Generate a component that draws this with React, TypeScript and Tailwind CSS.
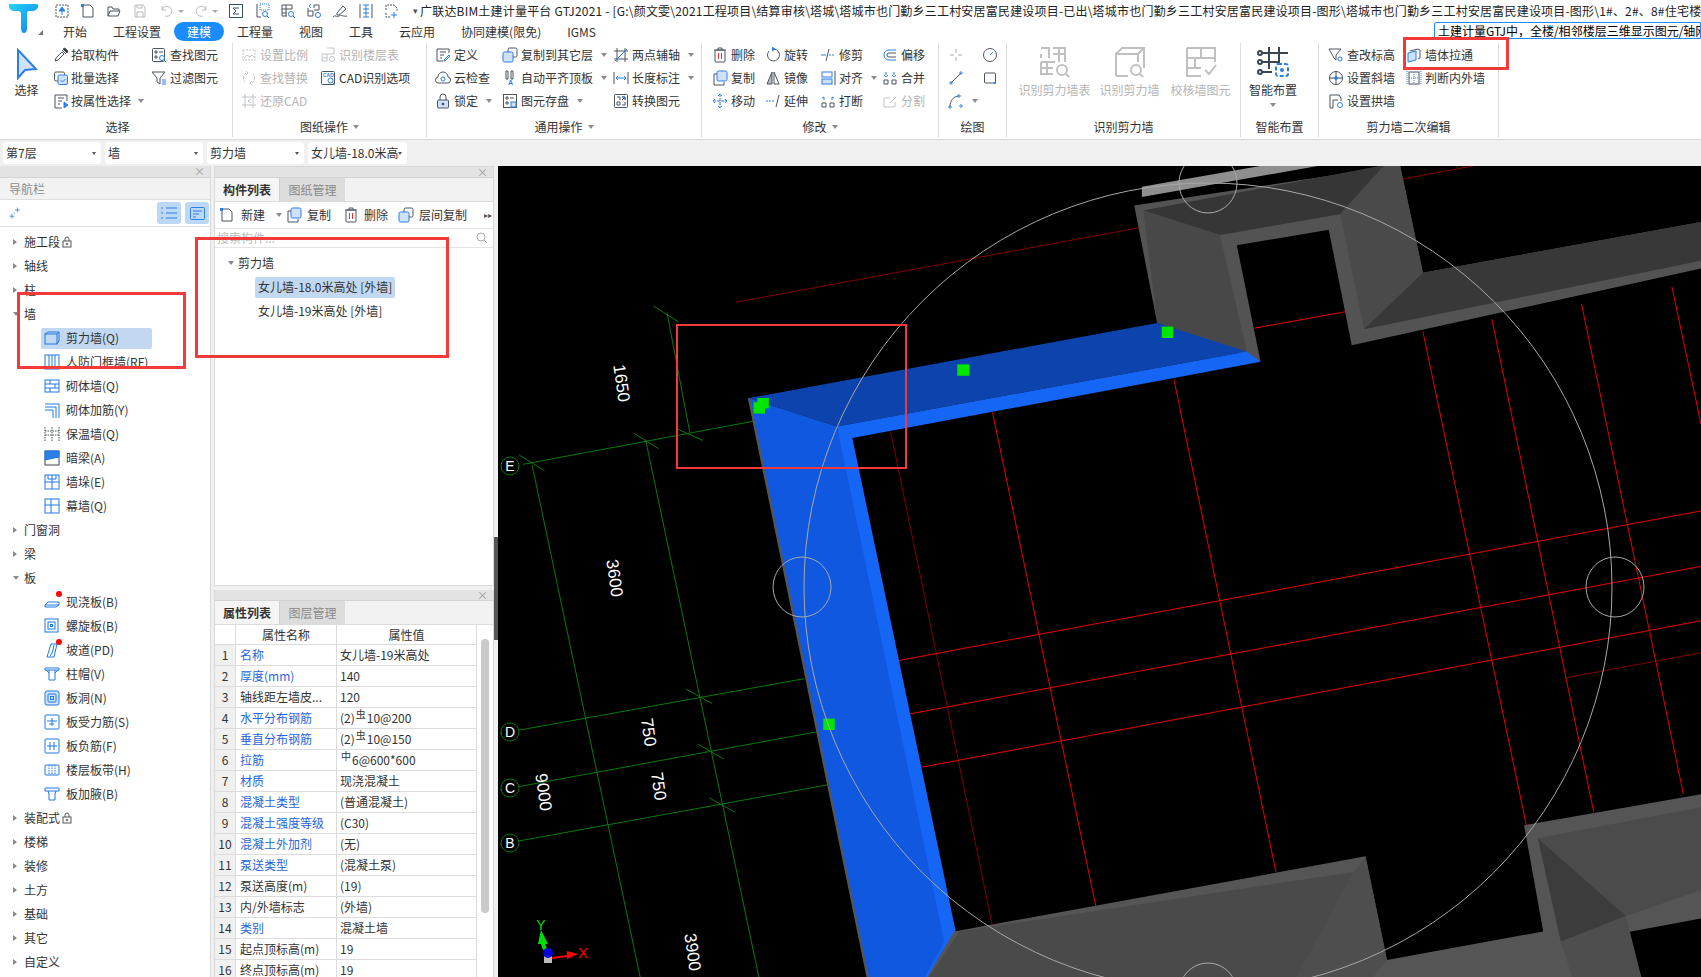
import type { ReactNode } from 'react';

const FONT = '"Noto Sans CJK SC", "Liberation Sans", sans-serif';
const D = '#4b5560';
const B = '#2a7fe8';
const L = '#cfe2fa';

function Ic({ children, size = 16, gray }: { children: ReactNode; size?: number; gray?: boolean }) {
  return (
    <svg width={size} height={size} viewBox="0 0 16 16" fill="none" stroke={D} strokeWidth="1" className={gray ? 'shrink-0 opacity-35' : 'shrink-0'}>
      {children}
    </svg>
  );
}

const icons: Record<string, ReactNode> = {
  up: (<><rect x="2" y="2" width="12" height="12" strokeDasharray="2 1" /><path d="M8 12V6M5 8l3-4 3 4z" stroke={B} fill={B} /></>),
  newf: (<><path d="M3 2h7l3 3v9H3z" /><rect x="1" y="1" width="3" height="3" fill={B} stroke="none" /></>),
  open: (<path d="M2 13V4h4l1 2h6v2M2 13l2-5h10l-2 5z" />),
  save: (<path d="M3 2h8l2 2v10H3zM5 2v3h5V2M5 14V9h6v5" stroke="#bbb" />),
  undo: (<path d="M4 3v4h4M4 7a5 5 0 1 1 3 6" stroke="#bbb" />),
  redo: (<path d="M12 3v4H8M12 7a5 5 0 1 0-3 6" stroke="#bbb" />),
  sum: (<><rect x="1.5" y="1.5" width="13" height="13" stroke="#35506e" /><path d="M11 5H5l3 3-3 3h6" stroke="#35506e" /></>),
  kb: (<><path d="M3 1v13h4" /><rect x="6" y="1" width="9" height="6" stroke={B} strokeDasharray="1 1" /><circle cx="11" cy="11" r="2.5" stroke={B} /><path d="M13 13l2 2" stroke={B} /></>),
  grid: (<><path d="M2 2h10v4M2 2v11h5M2 6h10M2 10h5M6 2v11" /><circle cx="11" cy="11" r="2.5" stroke={B} /><path d="M13 13l2 2" stroke={B} /></>),
  grid2: (<><path d="M8 2v3M8 2h5v5H8M2 8h5v5H2zM2 8V5" /><path d="M5 1l-2 2 2 2" stroke={B} /><circle cx="12" cy="12" r="2.5" stroke={B} /></>),
  pen: (<><path d="M5 10l6-7 3 3-7 6H5z" /><path d="M1 14c2-3 4 1 6-1s4 1 8 0" stroke={D} /></>),
  cols: (<><path d="M2 1v14M14 1v14" /><path d="M5 2h6M5 6h6M5 10h6M5 14h6M8 2v12" stroke={B} /></>),
  add: (<><path d="M2 7V2h8l3 3v3M2 10v4h4" strokeDasharray="2 1" /><path d="M10 9v6M7 12h6" stroke={B} /></>),
  pick: (<><path d="M2 14l1-3 6-6 2 2-6 6z" /><path d="M9 3l4 4M10 2l2-1 3 3-1 2z" fill="#333" /></>),
  batch: (<><rect x="1.5" y="2" width="10" height="9" rx="1.5" /><rect x="5" y="5" width="9.5" height="9.5" rx="1.5" fill={L} stroke={B} /><path d="M7.5 10l2 2 3-3" stroke={B} /></>),
  attr: (<><path d="M14 8V2H2v13h7" /><path d="M5 5h6M5 8h4M5 11h2" /><path d="M11 9v6l4-3z" fill={B} stroke={B} /></>),
  find: (<><rect x="1.5" y="1.5" width="12" height="13" rx="1" /><path d="M4 4h2v2H4zM8 5h4M4 9h2v2H4z" /><circle cx="11" cy="11" r="2.5" stroke={B} /><path d="M13 13l2 2" stroke={B} /></>),
  filter: (<><path d="M1 2h13L9 8v6L6 12V8z" /><path d="M11 10h4M11 12h4M11 14h4" stroke={B} /></>),
  scale: (<><path d="M2 3h12v10H2z" strokeDasharray="2 1" /><path d="M3 11l3-3 3 2 2-2 3 3" /></>),
  floors: (<><path d="M7 1h7v6H7M2 7h5v7H2zM2 11h5" /><circle cx="12" cy="12" r="2.5" /></>),
  repl: (<><path d="M5 3a6 6 0 0 0-1 9M11 13a6 6 0 0 0 1-9" strokeDasharray="3 1" /><path d="M5 1l2 2-2 2M11 15l-2-2 2-2" /></>),
  cad: (<><rect x="1.5" y="1.5" width="13" height="13" rx="1" /><text x="3" y="7" fontSize="5" fontFamily="Liberation Sans" fill={B} stroke="none" fontWeight="700">CAD</text><circle cx="10.5" cy="10.5" r="2.5" stroke={B} /><path d="M12.5 12.5l2 2" stroke={B} /></>),
  restore: (<><path d="M4 1v14M1 4h14M12 1v14M1 12h14" /><path d="M10 6L7 8l3 2" /></>),
  def: (<><path d="M14 6V2H2v12h6" /><path d="M5 5h6M5 8h4M5 11h2" /><path d="M9 13l5-5 1 1-5 5H9z" stroke={B} /></>),
  cloud: (<><path d="M4 13a3 3 0 0 1-1-6 5 5 0 0 1 10 0 3 3 0 0 1-1 6z" /><circle cx="8" cy="9" r="2" stroke={B} /></>),
  lock: (<><path d="M5 7V4a3 3 0 0 1 6 0v3" /><rect x="2.5" y="7" width="11" height="8" rx="1" fill={L} stroke={D} /><circle cx="8" cy="11" r="1" fill="#333" /></>),
  copyl: (<><rect x="6" y="1" width="9" height="9" rx="1.5" /><rect x="1" y="5" width="10" height="10" rx="1.5" fill={L} stroke={B} /></>),
  align: (<><path d="M4 1h2v8H4zM9 1h2v8H9z" /><text x="6" y="15" fontSize="7" fontFamily="Liberation Sans" fill={B} stroke="none" fontWeight="700">A</text></>),
  store: (<><rect x="1.5" y="1.5" width="13" height="13" /><path d="M4 4h2v2H4zM8 5h4M4 9h2v2H4z" /><rect x="9" y="9" width="5" height="5" fill={L} stroke={B} /></>),
  twop: (<><path d="M4 1v14M12 1v14M1 4h14M1 12h14" /><path d="M2 14L14 2" stroke={B} /></>),
  dim: (<><path d="M1 2v12M15 2v12" /><path d="M3 8h10M5 6L3 8l2 2M11 6l2 2-2 2" stroke={B} /></>),
  conv: (<><rect x="1.5" y="1.5" width="13" height="13" rx="1" /><path d="M9 4h3v3M9 7l3-3M4 9h3v3H4zM4 4h3v3M12 9v3H9" stroke={D} /><path d="M9 4h3v3" stroke={B} /></>),
  del: (<><path d="M2 3h12M6 3V1h4v2" /><rect x="3" y="3" width="10" height="12" rx="1" /><path d="M6.5 6v6M9.5 6v6" stroke="#e33" /></>),
  rot: (<><path d="M9 2a6 6 0 1 1-5 2" /><path d="M7 0l3 2-3 2" stroke={B} fill={B} /></>),
  trim: (<><path d="M1 8h5" stroke={B} /><path d="M9 8h5" stroke={B} strokeDasharray="2 1" /><path d="M9 2L6 14" /></>),
  offs: (<><path d="M14 3H7a5 5 0 0 0 0 10h7" stroke={B} /><path d="M14 6H7a2 2 0 0 0 0 4h7" /></>),
  copy: (<><rect x="5" y="1" width="10" height="10" rx="1.5" fill={L} stroke={B} /><path d="M5 4H2v11h10v-3" /></>),
  mirr: (<><path d="M7 2L2 14h5z" fill="#bbb" /><path d="M9 2l5 12H9z" /></>),
  alig: (<><rect x="2" y="2" width="10" height="5" stroke={B} /><rect x="2" y="9" width="10" height="5" stroke={B} fill={L} /><path d="M15 1v14" /></>),
  merge: (<><path d="M2 10h4v4H2zM10 10h4v4h-4z" /><path d="M4 2v3M12 2v3M2 5l2 2 2-2M10 5l2 2 2-2" stroke={B} /></>),
  move: (<path d="M8 1v14M1 8h14M6 3l2-2 2 2M6 13l2 2 2-2M3 6L1 8l2 2M13 6l2 2-2 2" stroke={B} strokeDasharray="3 1" />),
  ext: (<><path d="M1 8h9" stroke={B} strokeDasharray="2 1" /><path d="M14 2l-3 12" /></>),
  brk: (<><path d="M2 10h4v4H2zM10 10h4v4h-4z" /><path d="M4 7V4l-2 1M12 7V4l2 1" stroke={B} /></>),
  split: (<><path d="M2 5h6M2 5v9h11V9" /><path d="M8 10l6-6" /></>),
  cross: (<path d="M8 2v4M8 10v4M2 8h4M10 8h4" stroke="#aaa" />),
  clock: (<><circle cx="8" cy="8" r="6.5" /><path d="M8 8l3-3" stroke={B} /></>),
  line: (<><path d="M3 13L13 3" /><circle cx="3" cy="13" r="1.2" stroke={B} /><circle cx="13" cy="3" r="1.2" stroke={B} /></>),
  rect: (<><rect x="2.5" y="3" width="11" height="10" rx="1" /><circle cx="13" cy="13" r=".8" stroke={B} /></>),
  arc: (<><path d="M2 14C2 7 6 3 11 3" /><circle cx="2" cy="14" r="1.2" stroke={B} /><circle cx="11" cy="3" r="1.2" stroke={B} /><circle cx="13" cy="13" r="1.2" stroke={B} /></>),
  level: (<><path d="M1 2h12L8 8v5L6 11 1 2z" /><circle cx="12" cy="12" r="2" stroke={B} /></>),
  slope: (<><circle cx="8" cy="8" r="6.5" /><path d="M1 8h14M8 1v14" /><circle cx="8" cy="8" r="1.5" fill={B} stroke={B} /></>),
  archw: (<><path d="M2 15V2h9l2 3v3M2 15h3V7h5" /><circle cx="12" cy="12" r="2.5" stroke={B} /></>),
  pull: (<><path d="M4 4l8-2 2 1v8l-2 1" stroke={D} /><path d="M2 6l8-2v9l-8 2z" fill={L} stroke={B} /></>),
  inout: (<><rect x="3" y="2" width="10" height="12" /><path d="M3 8h10M8 2v12M1 1v14M15 1v14" strokeDasharray="1 1" stroke={B} /></>),
  spark: (<path d="M2 13h6M5 10v6M9 5h6M12 2v6M7 9h2" stroke={B} transform="scale(.9)" />),
};

function Caret() {
  return <span className="ml-[5px] w-0 h-0 border-x-[3px] border-x-transparent border-t-[4px] border-t-[#8c8c8c]" />;
}

function RI({ icon, label, dis, arrow, gap }: { icon: string; label?: string; dis?: boolean; arrow?: boolean; gap?: string }) {
  return (
    <div className={`flex items-center h-[23px] ${gap ?? 'gap-[3px]'}`}>
      <Ic gray={dis}>{icons[icon]}</Ic>
      {label && <span className={dis ? 'text-[#b4b4b4] whitespace-nowrap' : 'text-[#333] whitespace-nowrap'}>{label}</span>}
      {arrow && <Caret />}
    </div>
  );
}

function Col({ w, children }: { w: string; children: ReactNode }) {
  return <div className={`flex flex-col shrink-0 ${w}`}>{children}</div>;
}

function Group({ w, label, pl, arrow, lab, children }: { w: string; label: string; pl: string; arrow?: boolean; lab?: string; children: ReactNode }) {
  return (
    <div className={`flex flex-col shrink-0 border-r border-[#dcdcdc] my-[2px] ${w}`}>
      <div className={`flex flex-1 ${pl}`}>{children}</div>
      <div className={`h-[21px] flex items-center justify-center text-[#333] ${lab ?? ''}`}>
        {label}
        {arrow && <Caret />}
      </div>
    </div>
  );
}

function BigBtn({ w, label, dis, arrow, children }: { w: string; label: string; dis?: boolean; arrow?: boolean; children: ReactNode }) {
  return (
    <div className={`flex flex-col items-center shrink-0 ${w}`}>
      <div className="h-[38px] flex items-center">{children}</div>
      <span className={dis ? 'text-[#b4b4b4] whitespace-nowrap mt-[3px]' : 'text-[#333] whitespace-nowrap mt-[3px]'}>{label}</span>
      {arrow && <span className="mt-[7px] w-0 h-0 border-x-[3px] border-x-transparent border-t-[4px] border-t-[#8c8c8c]" />}
    </div>
  );
}

function Ribbon() {
  return (
    <div className="h-[99px] bg-white border-b border-[#d8d8d8] flex text-[12px] leading-none">
      <Group w="w-[233px]" label="选择" pl="pl-0" lab="pl-[3px]">
        <BigBtn w="w-[53px]" label="选择">
          <svg width="22" height="32" viewBox="0 0 22 32" className="mt-[4px]">
            <path d="M2 2l18 19-11 1-7 8z" fill={L} stroke={B} strokeWidth="2" />
          </svg>
        </BigBtn>
        <Col w="w-[98px]">
          <RI icon="pick" label="拾取构件" gap="gap-[2px]" />
          <RI icon="batch" label="批量选择" gap="gap-[2px]" />
          <RI icon="attr" label="按属性选择" arrow gap="gap-[2px]" />
        </Col>
        <Col w="w-[80px]">
          <RI icon="find" label="查找图元" />
          <RI icon="filter" label="过滤图元" />
        </Col>
      </Group>
      <Group w="w-[194px]" label="图纸操作" pl="pl-[8px]" arrow>
        <Col w="w-[79px]">
          <RI icon="scale" label="设置比例" dis />
          <RI icon="repl" label="查找替换" dis />
          <RI icon="restore" label="还原CAD" dis />
        </Col>
        <Col w="w-[100px]">
          <RI icon="floors" label="识别楼层表" dis />
          <RI icon="cad" label="CAD识别选项" />
        </Col>
      </Group>
      <Group w="w-[275px]" label="通用操作" pl="pl-[8px]" arrow>
        <Col w="w-[67px]">
          <RI icon="def" label="定义" />
          <RI icon="cloud" label="云检查" />
          <RI icon="lock" label="锁定" arrow />
        </Col>
        <Col w="w-[111px]">
          <RI icon="copyl" label="复制到其它层" arrow />
          <RI icon="align" label="自动平齐顶板" arrow />
          <RI icon="store" label="图元存盘" arrow />
        </Col>
        <Col w="w-[80px]">
          <RI icon="twop" label="两点辅轴" arrow />
          <RI icon="dim" label="长度标注" arrow />
          <RI icon="conv" label="转换图元" />
        </Col>
      </Group>
      <Group w="w-[237px]" label="修改" pl="pl-[10px]" arrow>
        <Col w="w-[53px]">
          <RI icon="del" label="删除" />
          <RI icon="copy" label="复制" />
          <RI icon="move" label="移动" />
        </Col>
        <Col w="w-[55px]">
          <RI icon="rot" label="旋转" />
          <RI icon="mirr" label="镜像" />
          <RI icon="ext" label="延伸" />
        </Col>
        <Col w="w-[62px]">
          <RI icon="trim" label="修剪" />
          <RI icon="alig" label="对齐" arrow />
          <RI icon="brk" label="打断" />
        </Col>
        <Col w="w-[50px]">
          <RI icon="offs" label="偏移" />
          <RI icon="merge" label="合并" />
          <RI icon="split" label="分割" dis />
        </Col>
      </Group>
      <Group w="w-[68px]" label="绘图" pl="pl-[9px]">
        <Col w="w-[34px]">
          <RI icon="cross" />
          <RI icon="line" />
          <RI icon="arc" arrow />
        </Col>
        <Col w="w-[20px]">
          <RI icon="clock" />
          <RI icon="rect" />
        </Col>
      </Group>
      <Group w="w-[234px]" label="识别剪力墙" pl="pl-[10px]">
        <BigBtn w="w-[75px]" label="识别剪力墙表" dis>
          <svg width="32" height="32" viewBox="0 0 32 32" fill="none" stroke="#c0c0c0" strokeWidth="2">
            <path d="M2 2h8v10M2 12V8M14 2h12v14M20 2v14M14 8h12M2 16h14M2 16v12h12M8 16v12M2 22h12" />
            <circle cx="23" cy="24" r="5" />
            <path d="M27 28l3 3" />
          </svg>
        </BigBtn>
        <BigBtn w="w-[75px]" label="识别剪力墙" dis>
          <svg width="32" height="32" viewBox="0 0 32 32" fill="none" stroke="#c0c0c0" strokeWidth="2">
            <path d="M2 30V8h22v8M2 8l6-6h22v20M24 8l6-6M14 30H2" />
            <circle cx="22" cy="24" r="5" />
            <path d="M26 28l3 3" />
          </svg>
        </BigBtn>
        <BigBtn w="w-[67px]" label="校核墙图元" dis>
          <svg width="32" height="32" viewBox="0 0 32 32" fill="none" stroke="#c0c0c0" strokeWidth="2">
            <path d="M2 2h28v14M2 2v28h14M2 12h28M16 2v10M10 12v10M2 22h14M20 24l4 4 7-9" />
          </svg>
        </BigBtn>
      </Group>
      <Group w="w-[78px]" label="智能布置" pl="pl-0">
        <BigBtn w="w-[64px]" label="智能布置" arrow>
          <svg width="32" height="32" viewBox="0 0 32 32" fill="none" stroke="#3c4650" strokeWidth="2" className="mt-[-2px]">
            <path d="M12 2v22M22 2v14M5 8h26M5 17h18M5 27h10" />
            <circle cx="3" cy="8" r="2" />
            <circle cx="3" cy="17" r="2" />
            <circle cx="3" cy="27" r="2" />
            <rect x="19" y="19" width="12" height="12" rx="2" stroke={B} strokeDasharray="4 2" />
            <circle cx="25" cy="25" r="1" fill={B} stroke={B} />
          </svg>
        </BigBtn>
      </Group>
      <Group w="w-[180px]" label="剪力墙二次编辑" pl="pl-[9px]">
        <Col w="w-[78px]">
          <RI icon="level" label="查改标高" />
          <RI icon="slope" label="设置斜墙" />
          <RI icon="archw" label="设置拱墙" />
        </Col>
        <Col w="w-[80px]">
          <RI icon="pull" label="墙体拉通" />
          <RI icon="inout" label="判断内外墙" />
        </Col>
      </Group>
    </div>
  );
}

function Combo({ w, label }: { w: string; label: string }) {
  return (
    <div className={`h-[22px] bg-white rounded-[3px] flex items-center justify-between pl-[3px] pr-[5px] overflow-hidden ${w}`}>
      <span className="whitespace-nowrap overflow-hidden">{label}</span>
      <span className="shrink-0 w-0 h-0 border-x-[2.5px] border-x-transparent border-t-[3px] border-t-[#555]" />
    </div>
  );
}

function TitleBar() {
  const qat = ['up', 'newf', 'open', 'save', 'undo', 'redo', 'sum', 'kb', 'grid', 'grid2', 'pen', 'cols', 'add'];
  return (
    <div className="h-[41px] bg-white flex text-[12px] relative">
      <div className="w-[50px] shrink-0 relative">
        <svg width="30" height="30" viewBox="0 0 30 30" className="ml-[9px] mt-[3px]">
          <defs>
            <linearGradient id="tlogo" x1="0" y1="0" x2="1" y2="1">
              <stop offset="0" stopColor="#28d6f5" />
              <stop offset="1" stopColor="#0b7df0" />
            </linearGradient>
          </defs>
          <path d="M3 1h24q3 0 2 3t-5 4h-4q-2 0-2 3v14q0 5-3 5t-3-5V11q0-3-3-3H6Q1 8 0 4t3-3z" fill="url(#tlogo)" />
        </svg>
        <span className="absolute left-[38px] top-[30px] w-0 h-0 border-l-[5px] border-l-transparent border-b-[5px] border-b-[#777]" />
      </div>
      <div className="flex-1 min-w-0 flex flex-col">
        <div className="h-[22px] flex items-center overflow-hidden">
          <div className="flex items-center ml-[4px] shrink-0 gap-[10px]">
            {qat.map((k) => (
              <span key={k} className="flex items-center">
                <Ic>{icons[k]}</Ic>
                {k === 'undo' && <span className="ml-[4px] w-0 h-0 border-x-[3px] border-x-transparent border-t-[3px] border-t-[#aaa]" />}
                {k === 'redo' && <span className="ml-[2px] w-0 h-0 border-x-[3px] border-x-transparent border-t-[3px] border-t-[#aaa]" />}
              </span>
            ))}
          </div>
          <span className="ml-[13px] mr-[2px] shrink-0 text-[#555] text-[9px]">▾</span>
          <span className="whitespace-nowrap text-[#222] text-[12px] tracking-[0.2px]">
            广联达BIM土建计量平台 GTJ2021 - [G:\颜文雯\2021工程项目\结算审核\塔城\塔城市也门勤乡三工村安居富民建设项目-已出\塔城市也门勤乡三工村安居富民建设项目-图形\塔城市也门勤乡三工村安居富民建设项目-图形\1#、2#、8#住宅楼.GTJ]
          </span>
        </div>
        <div className="h-[19px] flex items-center text-[#333]">
          {['开始', '工程设置', '建模', '工程量', '视图', '工具', '云应用', '协同建模(限免)', 'IGMS'].map((t) => (
            <span key={t} className={t === '建模' ? 'h-[19px] px-[13px] flex items-center rounded-full bg-[#1a8cff] text-white' : 'px-[13px] whitespace-nowrap'}>
              {t}
            </span>
          ))}
        </div>
      </div>
      <div className="absolute left-[1434px] right-0 top-[22px] h-[17px] bg-white border border-[#1a8cff] rounded-l-[2px] overflow-hidden whitespace-nowrap text-black leading-[15px] pl-[3px]">
        土建计量GTJ中，全楼/相邻楼层三维显示图元/轴网
      </div>
    </div>
  );
}

function Wicon({ k }: { k: number }) {
  const paths = [
    <><rect x="1" y="4" width="12" height="10" /><path d="M1 4l3-2h11v9l-2 3M13 4l2-2" /></>,
    <><rect x="1" y="1" width="14" height="14" /><path d="M5 1v14M8 1v14M11 1v14" /></>,
    <><rect x="1" y="2" width="14" height="12" /><path d="M1 6h14M1 10h14M6 2v4M11 6v4M6 10v4" /></>,
    <><path d="M1 2h14v14M1 5h11v11M1 8h8v8" /></>,
    <><path d="M1 1v14M15 1v14M8 1v14M1 5h14M1 9h14" strokeDasharray="1.5 1" stroke="#455" /></>,
    <><rect x="1" y="1" width="14" height="14" stroke="#445" /><path d="M1 1h14v6L1 10z" fill={B} /></>,
    <><rect x="1" y="1" width="14" height="14" /><path d="M1 8h14M8 1v14M4 1v4h8V1" /></>,
    <><rect x="1" y="1" width="14" height="14" /><path d="M1 7h14M7 1v14" /></>,
    <><path d="M1 11l3-3h11v3zM1 11v2h11l3-2" /></>,
    <><rect x="1" y="1" width="13" height="13" /><rect x="4" y="4" width="7" height="7" /><rect x="6.5" y="6.5" width="2" height="2" /></>,
    <><path d="M3 15L7 2h6l-3 13zM6 14c3-3 3-7 4-11" /></>,
    <><path d="M1 2h14v2H1zM5 4v10h6V4M2 4l3 3M14 4l-3 3" /></>,
    <><rect x="1" y="1" width="14" height="14" rx="2" fill={L} /><rect x="4" y="4" width="8" height="8" rx="1" /><rect x="6.5" y="6.5" width="3" height="3" /></>,
    <><rect x="1" y="1" width="14" height="14" rx="1" /><path d="M3 7h10M8 4v8M5 10h5" /></>,
    <><rect x="1" y="1" width="14" height="14" rx="1" /><path d="M6 4v8M10 4v8M3 8h10" /></>,
    <><rect x="1" y="3" width="14" height="10" rx="1" /><path d="M5 3v10M8 3v10M11 3v10" strokeDasharray="1.5 1" /></>,
    <><path d="M1 2h14v3H1zM4 5l1 3v6h6V8l1-3" /></>,
  ];
  return (
    <svg width="16" height="16" viewBox="0 0 16 16" fill="none" stroke="#1f78e6" strokeWidth="1" className="shrink-0">
      {paths[k]}
    </svg>
  );
}

function Tri({ open }: { open?: boolean }) {
  return open ? (
    <span className="w-0 h-0 border-x-[3.5px] border-x-transparent border-t-[4px] border-t-[#888]" />
  ) : (
    <span className="w-0 h-0 border-y-[3.5px] border-y-transparent border-l-[4px] border-l-[#888]" />
  );
}

function Lock() {
  return (
    <svg width="10" height="12" viewBox="0 0 10 12" fill="none" stroke="#555" className="ml-[2px]">
      <path d="M3 5V3a2 2 0 0 1 4 0v2" />
      <rect x="1" y="5" width="8" height="6" />
      <circle cx="5" cy="8" r=".8" />
    </svg>
  );
}

type NavNode = { t: string; open?: boolean; lock?: boolean; kids?: { t: string; k: number; sel?: boolean; dot?: boolean }[] };

const nav: NavNode[] = [
  { t: '施工段', lock: true },
  { t: '轴线' },
  { t: '柱' },
  {
    t: '墙',
    open: true,
    kids: [
      { t: '剪力墙(Q)', k: 0, sel: true },
      { t: '人防门框墙(RF)', k: 1 },
      { t: '砌体墙(Q)', k: 2 },
      { t: '砌体加筋(Y)', k: 3 },
      { t: '保温墙(Q)', k: 4 },
      { t: '暗梁(A)', k: 5 },
      { t: '墙垛(E)', k: 6 },
      { t: '幕墙(Q)', k: 7 },
    ],
  },
  { t: '门窗洞' },
  { t: '梁' },
  {
    t: '板',
    open: true,
    kids: [
      { t: '现浇板(B)', k: 8, dot: true },
      { t: '螺旋板(B)', k: 9 },
      { t: '坡道(PD)', k: 10, dot: true },
      { t: '柱帽(V)', k: 11 },
      { t: '板洞(N)', k: 12 },
      { t: '板受力筋(S)', k: 13 },
      { t: '板负筋(F)', k: 14 },
      { t: '楼层板带(H)', k: 15 },
      { t: '板加腋(B)', k: 16 },
    ],
  },
  { t: '装配式', lock: true },
  { t: '楼梯' },
  { t: '装修' },
  { t: '土方' },
  { t: '基础' },
  { t: '其它' },
  { t: '自定义' },
];

function CloseStrip({ tall }: { tall?: boolean }) {
  return (
    <div className={`${tall ? 'h-[12px]' : 'h-[11px]'} bg-[#e3e3e3] flex items-center justify-end pr-[5px] border-b border-[#d4d4d4]`}>
      <span className="text-[#9a9a9a] text-[11px] leading-none">×</span>
    </div>
  );
}

function NavPanel() {
  return (
    <div className="w-[211px] shrink-0 bg-white flex flex-col border-r border-[#d8d8d8] overflow-hidden text-[12px]">
      <CloseStrip tall />
      <div className="h-[21px] bg-[#f2f2f2] flex items-center pl-[9px] text-[#8c8c8c]">导航栏</div>
      <div className="h-[28px] flex items-center border-y border-[#dedede] pl-[8px] pr-[1px]">
        <Ic size={14}>{icons.spark}</Ic>
        <div className="ml-auto flex gap-[4px]">
          <span className="w-[24px] h-[22px] bg-[#bcd8f5] rounded-[3px] flex items-center justify-center">
            <svg width="16" height="12" viewBox="0 0 16 12" stroke={B} fill="none">
              <path d="M5 1h11M5 6h11M5 11h11M0 1h2M0 6h2M0 11h2" />
            </svg>
          </span>
          <span className="w-[24px] h-[22px] bg-[#bcd8f5] rounded-[3px] flex items-center justify-center">
            <svg width="15" height="13" viewBox="0 0 15 13" stroke={B} fill="none">
              <rect x=".5" y=".5" width="14" height="12" rx="1" />
              <path d="M3 4h9M3 7h6M3 10h3" />
            </svg>
          </span>
        </div>
      </div>
      <div className="pt-[3px] text-[#333]">
        {nav.map((n) => (
          <div key={n.t}>
            <div className="h-[24px] flex items-center">
              <span className="w-[24px] shrink-0 pl-[13px] flex items-center">
                <Tri open={n.open} />
              </span>
              {n.t}
              {n.lock && <Lock />}
            </div>
            {n.kids?.map((c) => (
              <div key={c.t} className="h-[24px] flex items-center pl-[41px]">
                <div className={c.sel ? 'flex items-center h-[21px] w-[111px] bg-[#c1d8f0] rounded-[2px] pl-[3px]' : 'flex items-center h-[21px] pl-[3px] relative'}>
                  <Wicon k={c.k} />
                  <span className="ml-[6px]">{c.t}</span>
                  {c.dot && <span className="absolute left-[15px] top-[-1px] w-[6px] h-[6px] rounded-full bg-[#f00]" />}
                </div>
              </div>
            ))}
          </div>
        ))}
      </div>
    </div>
  );
}

function Tabs({ a, b }: { a: string; b: string }) {
  return (
    <div className="h-[24px] flex border-b border-[#dcdcdc] bg-[#f2f2f2]">
      <span className="w-[65px] flex items-center justify-center font-bold text-[#333] bg-[#f5f5f5] border-r border-[#d0d0d0]">{a}</span>
      <span className="w-[65px] flex items-center justify-center text-[#8a8a8a] bg-[#dcdcdc]">{b}</span>
    </div>
  );
}

const rows: { n: string; v: ReactNode; blue?: boolean }[] = [
  { n: '名称', v: '女儿墙-19米高处', blue: true },
  { n: '厚度(mm)', v: '140', blue: true },
  { n: '轴线距左墙皮...', v: '120' },
  { n: '水平分布钢筋', v: (<>(2)<sup className="text-[10px] mx-[1px]">虫</sup>10@200</>), blue: true },
  { n: '垂直分布钢筋', v: (<>(2)<sup className="text-[10px] mx-[1px]">虫</sup>10@150</>), blue: true },
  { n: '拉筋', v: (<><sup className="text-[10px] mx-[1px]">中</sup>6@600*600</>), blue: true },
  { n: '材质', v: '现浇混凝土', blue: true },
  { n: '混凝土类型', v: '(普通混凝土)', blue: true },
  { n: '混凝土强度等级', v: '(C30)', blue: true },
  { n: '混凝土外加剂', v: '(无)', blue: true },
  { n: '泵送类型', v: '(混凝土泵)', blue: true },
  { n: '泵送高度(m)', v: '(19)' },
  { n: '内/外墙标志', v: '(外墙)' },
  { n: '类别', v: '混凝土墙', blue: true },
  { n: '起点顶标高(m)', v: '19' },
  { n: '终点顶标高(m)', v: '19' },
];

function MidPanel() {
  return (
    <div className="w-[287px] shrink-0 flex flex-col pl-[3px] pr-[4px] bg-[#f0f0f0] text-[12px] text-[#333] overflow-hidden">
      <div className="h-[420px] shrink-0 bg-white border border-[#d8d8d8] flex flex-col">
        <CloseStrip />
        <Tabs a="构件列表" b="图纸管理" />
        <div className="h-[27px] flex items-center border-b border-[#e4e4e4] pl-[4px] relative">
          <span className="flex items-center w-[67px] gap-[6px]">
            <Ic>{icons.newf}</Ic>新建<Caret />
          </span>
          <span className="flex items-center w-[57px] gap-[5px]">
            <Ic>{icons.copy}</Ic>复制
          </span>
          <span className="flex items-center w-[55px] gap-[5px]">
            <Ic>{icons.del}</Ic>删除
          </span>
          <span className="flex items-center gap-[5px]">
            <Ic>{icons.copyl}</Ic>层间复制
          </span>
          <span className="absolute right-[1px] text-[#555] text-[8px]">▸▸</span>
        </div>
        <div className="h-[19px] flex items-center justify-between border-b border-[#e4e4e4] px-[2px] text-[#bbb]">
          搜索构件...
          <svg width="12" height="12" viewBox="0 0 12 12" fill="none" stroke="#aaa" className="mr-[3px]">
            <circle cx="5" cy="5" r="4" />
            <path d="M8 8l3 3" />
          </svg>
        </div>
        <div className="pt-[3px]">
          <div className="h-[24px] flex items-center pl-[13px] gap-[4px]">
            <Tri open />
            剪力墙
          </div>
          <div className="h-[24px] flex items-center pl-[40px]">
            <span className="h-[21px] px-[3px] flex items-center bg-[#c1d8f0] rounded-[2px]">女儿墙-18.0米高处 [外墙]</span>
          </div>
          <div className="h-[24px] flex items-center pl-[43px]">女儿墙-19米高处 [外墙]</div>
        </div>
      </div>
      <div className="h-[4px] shrink-0" />
      <div className="flex-1 min-h-0 bg-white border-x border-[#d8d8d8] flex flex-col overflow-hidden">
        <CloseStrip />
        <Tabs a="属性列表" b="图层管理" />
        <div className="flex flex-1 min-h-0 overflow-hidden">
          <div className="w-[262px] shrink-0">
            <div className="h-[20px] flex border-b border-[#dcdcdc]">
              <span className="w-[21px] border-r border-[#dcdcdc]" />
              <span className="w-[101px] text-center border-r border-[#dcdcdc] leading-[20px]">属性名称</span>
              <span className="flex-1 text-center border-r border-[#dcdcdc] leading-[20px]">属性值</span>
            </div>
            {rows.map((r, i) => (
              <div key={r.n} className="h-[21px] flex border-b border-[#dcdcdc] leading-[20px]">
                <span className="w-[21px] shrink-0 text-center bg-[#f0f0f0] border-r border-[#dcdcdc] text-[#333]">{i + 1}</span>
                <span className={r.blue ? 'w-[101px] shrink-0 pl-[4px] border-r border-[#dcdcdc] text-[#1f66e0]' : 'w-[101px] shrink-0 pl-[4px] border-r border-[#dcdcdc]'}>{r.n}</span>
                <span className="flex-1 pl-[3px] border-r border-[#dcdcdc] whitespace-nowrap">{r.v}</span>
              </div>
            ))}
          </div>
          <div className="flex-1 pt-[14px] flex justify-center">
            <div className="w-[8px] h-[274px] bg-[#c9c9c9] rounded-full" />
          </div>
        </div>
      </div>
    </div>
  );
}

function Canvas() {
  const sx = 1201 / 1568;
  const sy = 812 / 1568;
  const red = [
    [520, 957, 1568, 668],
    [535, 1060, 1568, 775],
    [550, 1163, 1568, 880],
    [985, 315, 1105, 283],
    [643, 478, 778, 1432],
    [880, 415, 1013, 1365],
    [1205, 322, 1340, 1275],
    [1295, 298, 1428, 1250],
    [1412, 268, 1545, 1215],
    [1530, 235, 1568, 500],
  ];
  const dark = [
    [308, 265, 1270, 2],
    [510, 515, 643, 1470],
    [1392, 990, 1568, 942],
  ];
  const green = [
    [30, 578, 330, 495],
    [0, 1098, 397, 992],
    [0, 1207, 412, 1095],
    [0, 1312, 427, 1197],
    [42, 580, 183, 1568],
    [190, 530, 338, 1568],
    [218, 285, 248, 518],
    [200, 272, 233, 303],
    [232, 510, 265, 532],
    [175, 518, 207, 548],
    [25, 560, 58, 590],
    [243, 1012, 277, 1040],
    [258, 1118, 292, 1147],
    [273, 1222, 307, 1250],
  ];
  const dims: [string, number, number][] = [
    ['1650', 116, 219],
    ['3600', 109, 414],
    ['750', 143, 568],
    ['750', 153, 622],
    ['9000', 38, 628],
    ['3900', 187, 788],
  ];
  const marks = [
    [336, 450, 15, 20],
    [331, 458, 15, 22],
    [597, 385, 16, 22],
    [864, 312, 15, 22],
    [422, 1069, 15, 22],
  ];
  return (
    <div className="flex-1 min-w-0 bg-black relative overflow-hidden">
      <svg className="block" width="1203" height="811" viewBox="-2 1 1203 811">
        <g transform={`scale(${sx} ${sy})`}>
          {dark.map((l, i) => (
            <line key={i} x1={l[0]} y1={l[1]} x2={l[2]} y2={l[3]} stroke="#7d0000" vectorEffect="non-scaling-stroke" />
          ))}
          {red.map((l, i) => (
            <line key={i} x1={l[0]} y1={l[1]} x2={l[2]} y2={l[3]} stroke="#e60000" vectorEffect="non-scaling-stroke" />
          ))}
          {green.map((l, i) => (
            <line key={i} x1={l[0]} y1={l[1]} x2={l[2]} y2={l[3]} stroke="#0b7a0b" vectorEffect="non-scaling-stroke" />
          ))}
          <polygon points="838,42 1000,0 1075,0 838,62" fill="#8f8f8f" />
          <polygon points="828,78 1175,0 1205,208 1568,110 1568,200 1112,348 1082,125 962,155 993,380 858,305" fill="#535353" />
          <polygon points="840,88 1155,0 1097,95 940,135" fill="#363636" />
          <polygon points="840,88 940,135 975,360 858,305" fill="#484848" />
          <polygon points="1097,95 1155,0 1175,0 1205,208 1128,317" fill="#4a4a4a" />
          <polygon points="1205,208 1568,110 1568,185 1128,317" fill="#383838" />
          <polygon points="325,450 858,305 975,360 440,505" fill="#0d43ad" />
          <polygon points="440,505 975,360 993,380 460,527 595,1480 578,1568 540,1568" fill="#1666f5" />
          <polygon points="325,450 440,505 580,1500 555,1568 480,1568 330,490" fill="#1158e0" />
          <line x1="325" y1="450" x2="480" y2="1568" stroke="#555" strokeWidth="3" />
          <polygon points="558,1568 593,1480 1130,1335 1158,1535 1362,1480 1337,1275 1568,1215 1568,1455 1470,1482 1490,1568" fill="#555" />
          <polygon points="600,1480 1115,1365 1040,1568 560,1568" fill="#4a4a4a" />
          <polygon points="1115,1365 1130,1335 1158,1535 1140,1568 1040,1568" fill="#4e4e4e" />
          <polygon points="1355,1300 1568,1240 1568,1400 1470,1450" fill="#4b4b4b" />
          <polygon points="1355,1300 1470,1450 1385,1500" fill="#3c3c3c" />
          <polygon points="1385,1500 1470,1450 1490,1568 1400,1568" fill="#4e4e4e" />
          {marks.map((m, i) => (
            <rect key={i} x={m[0]} y={m[1]} width={m[2]} height={m[3]} fill="#00e600" />
          ))}
        </g>
        <g fill="none" stroke="#a8a8a8">
          <circle cx="708" cy="422" r="404" />
          <ellipse cx="302" cy="422" rx="29" ry="30" />
          <ellipse cx="1115" cy="422" rx="29" ry="30" />
          <ellipse cx="708" cy="18" rx="29" ry="30" />
          <ellipse cx="708" cy="828" rx="29" ry="30" />
        </g>
        {[
          ['E', 301],
          ['D', 567],
          ['C', 623],
          ['B', 678],
        ].map(([t, y]) => (
          <g key={t as string}>
            <circle cx="10" cy={y as number} r="9" fill="#000" stroke="#0b7a0b" />
            <text x="10" y={(y as number) + 5} fill="#fff" fontSize="14" textAnchor="middle" fontFamily="Liberation Sans">
              {t}
            </text>
          </g>
        ))}
        {dims.map(([t, x, y]) => (
          <text key={t + x} transform={`translate(${x} ${y}) rotate(82)`} fill="#fff" fontSize="17" textAnchor="middle" fontFamily="Liberation Sans">
            {t}
          </text>
        ))}
        <g transform="translate(-500 -165)">
          <rect x="544" y="954" width="8" height="9" fill="#bbb" />
          <path d="M541 930l-3 14h3l2 6 4-1-2-5h3z" fill="#0d0" />
          <path d="M552 957l15-2v-4l11 3-11 5v-2l-15 2z" fill="#f00" />
          <circle cx="548" cy="953" r="5" fill="#00d" />
          <text x="541" y="930" fill="#0d0" fontSize="14" textAnchor="middle" fontFamily="Liberation Sans">Y</text>
          <text x="583" y="958" fill="#f00" fontSize="15" textAnchor="middle" fontFamily="Liberation Sans">X</text>
        </g>
      </svg>
      <div className="absolute left-[178px] top-[158px] w-[231px] h-[145px] border-[2px] border-[#f33a3a]" />
    </div>
  );
}

export default function App() {
  return (
    <div className="w-[1701px] h-[977px] overflow-hidden relative flex flex-col bg-[#f0f0f0]" style={{ fontFamily: FONT }}>
      <TitleBar />
      <Ribbon />
      <div className="h-[26px] shrink-0 flex items-center gap-[4px] pl-[3px] text-[12px] text-[#333] bg-[#f0f0f0]">
        <Combo w="w-[98px]" label="第7层" />
        <Combo w="w-[98px]" label="墙" />
        <Combo w="w-[97px]" label="剪力墙" />
        <Combo w="w-[99px]" label="女儿墙-18.0米高处" />
      </div>
      <div className="flex-1 min-h-0 flex">
        <NavPanel />
        <MidPanel />
        <Canvas />
      </div>
      <div className="absolute left-[494px] top-[537px] w-[4px] h-[103px] bg-[#555]" />
      <div className="absolute left-[1403px] top-[37px] w-[106px] h-[33px] border-[3px] border-[#f33a3a]" />
      <div className="absolute left-[17px] top-[292px] w-[169px] h-[77px] border-[3px] border-[#f33a3a]" />
      <div className="absolute left-[195px] top-[237px] w-[254px] h-[121px] border-[3px] border-[#f33a3a]" />
    </div>
  );
}
